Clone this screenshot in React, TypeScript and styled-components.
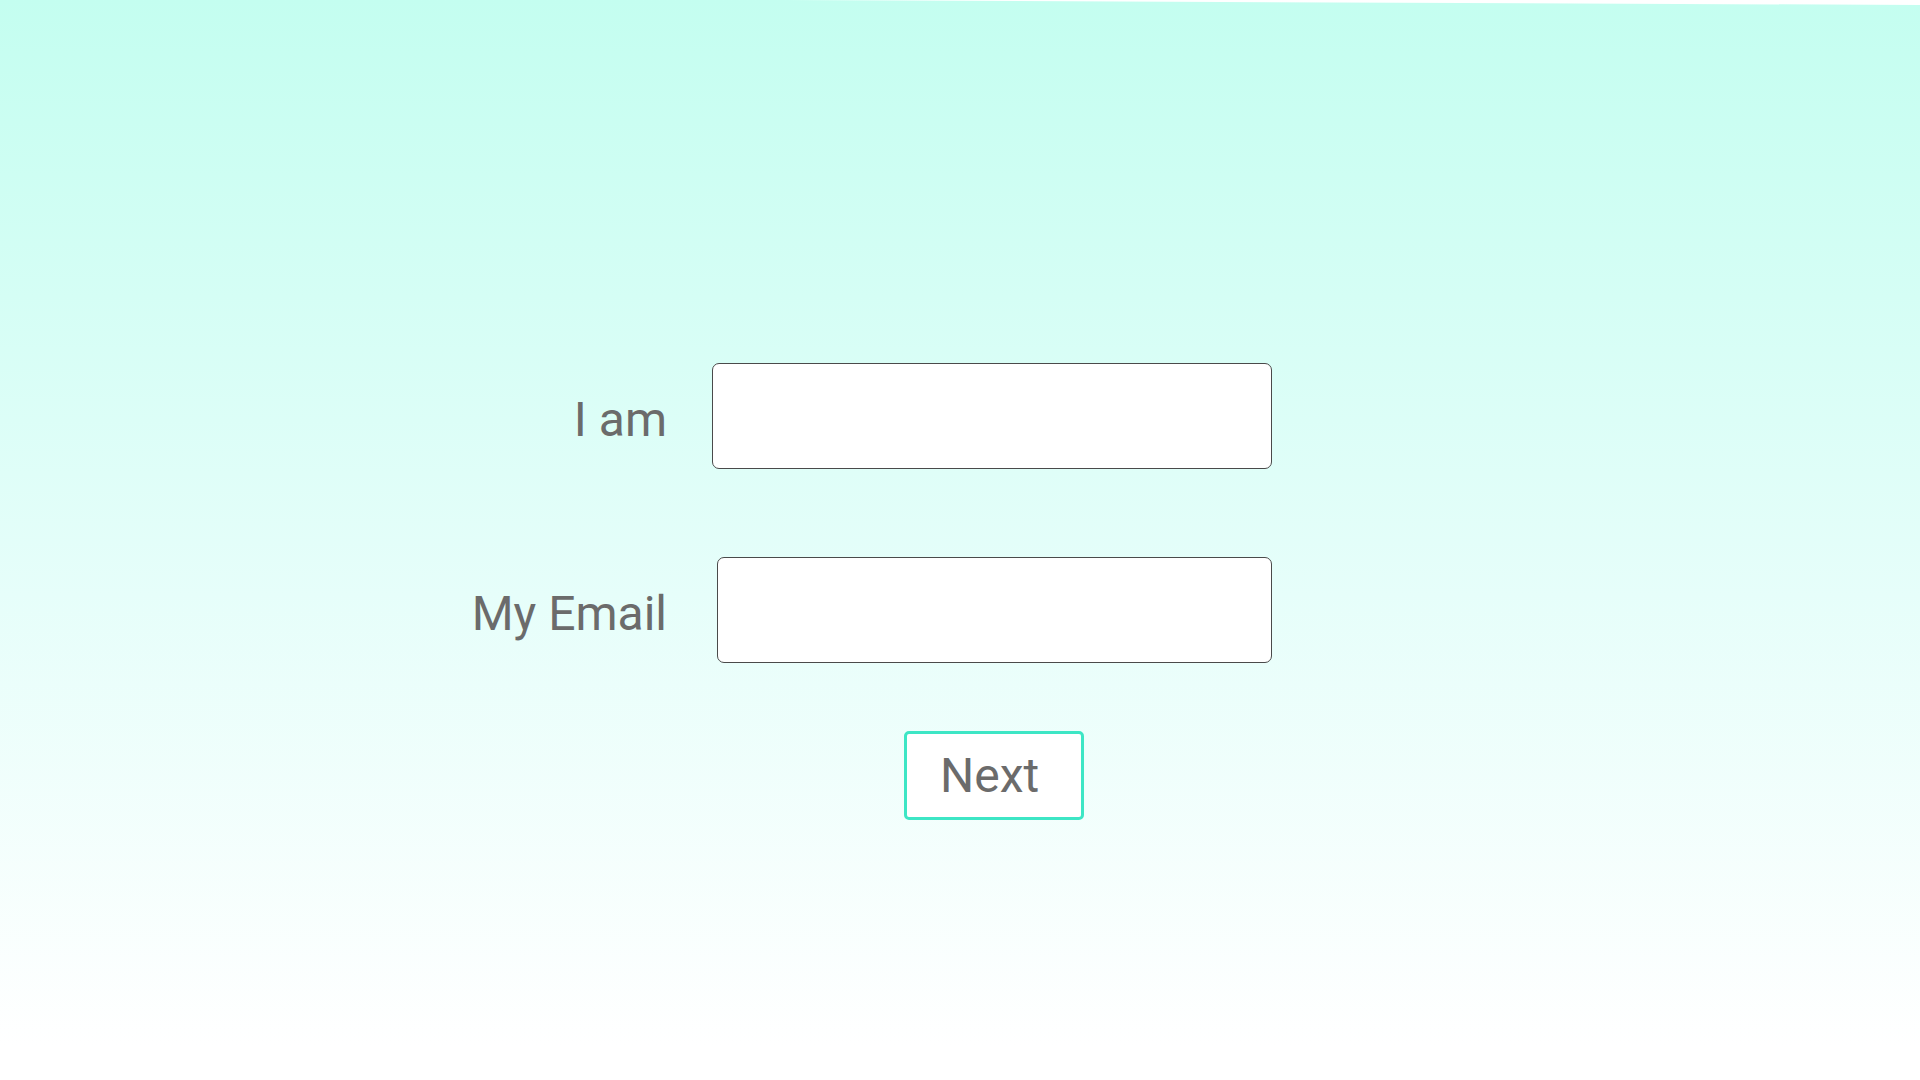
import styled, { createGlobalStyle } from "styled-components";
import { useState } from "react";

const GlobalStyle = createGlobalStyle`
  html, body {
    margin: 0;
    padding: 0;
    background: #ffffff;
  }
  body {
    font-family: Roboto, "Liberation Sans", sans-serif;
  }
`;

const App = () => {
  const [name, setName] = useState("");
  const [email, setEmail] = useState("");

  const submitHandler = (e: React.FormEvent<HTMLFormElement>) => {
    e.preventDefault();
  };

  return (
    <PageStyle>
      <GlobalStyle />
      <FormStyle onSubmit={submitHandler}>
        <LabelStyle htmlFor="name">I am</LabelStyle>
        <InputStyle
          id="name"
          $width={560}
          value={name}
          onChange={(e) => setName(e.target.value)}
        />
        <LabelStyle htmlFor="email">My Email</LabelStyle>
        <InputStyle
          id="email"
          type="email"
          $width={555}
          value={email}
          onChange={(e) => setEmail(e.target.value)}
        />
        <ButtonRowStyle>
          <NextButtonStyle type="submit">Next</NextButtonStyle>
        </ButtonRowStyle>
      </FormStyle>
    </PageStyle>
  );
};

export default App;

const PageStyle = styled.div`
  box-sizing: border-box;
  min-height: 100vh;
  padding-top: 363px;
  background: linear-gradient(to bottom, #c4fef0 0%, #e6fefa 55%, #ffffff 97%);
  clip-path: polygon(0 0, 41% 0, 100% 5px, 100% 100%, 0 100%);
`;

const FormStyle = styled.form`
  display: grid;
  grid-template-columns: 202px 605px;
  row-gap: 88px;
  padding-left: 465px;
`;

const LabelStyle = styled.label`
  justify-self: end;
  align-self: center;
  margin-top: 7px;
  font-size: 48px;
  line-height: 56px;
  color: #6b6b6b;
`;

const InputStyle = styled.input<{ $width: number }>`
  justify-self: end;
  box-sizing: border-box;
  width: ${({ $width }) => $width}px;
  height: 106px;
  border: 1px solid #4a4a4a;
  border-radius: 7px;
  background: #ffffff;
  font-size: 32px;
  padding: 0 16px;
  outline: none;
`;

const ButtonRowStyle = styled.div`
  grid-column: 2;
  display: flex;
  justify-content: flex-end;
  padding-right: 188px;
  margin-top: -20px;
`;

const NextButtonStyle = styled.button`
  box-sizing: border-box;
  width: 180px;
  height: 89px;
  padding: 0 0 0 33px;
  text-align: left;
  border: 3px solid #3de6c5;
  border-radius: 5px;
  background: #ffffff;
  font-family: Roboto, "Liberation Sans", sans-serif;
  font-size: 48px;
  line-height: 56px;
  color: #6b6b6b;
  cursor: pointer;
`;
